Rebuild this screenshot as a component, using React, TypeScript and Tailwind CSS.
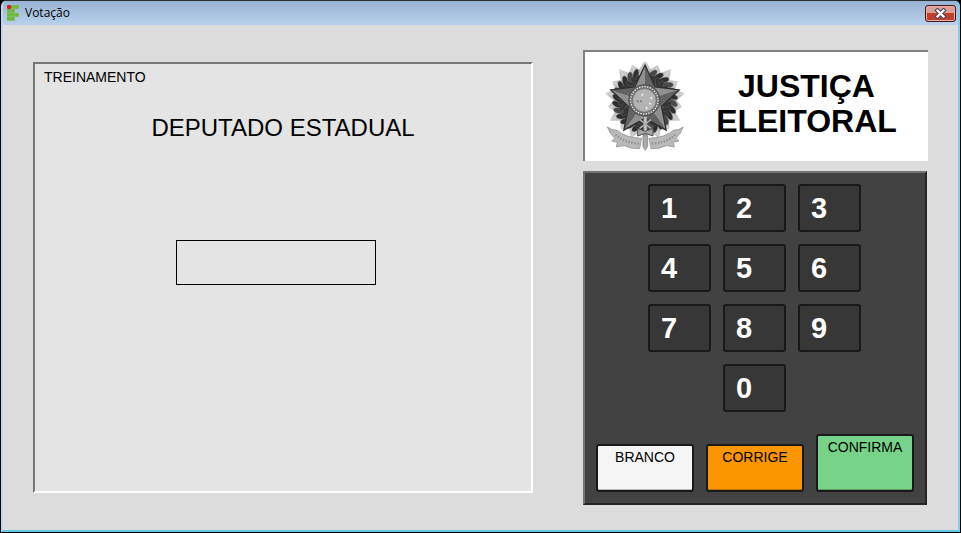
import React from "react";

const point = (cx: number, cy: number, r: number, deg: number): [number, number] => {
  const a = (deg * Math.PI) / 180;
  return [cx + r * Math.sin(a), cy - r * Math.cos(a)];
};
const toPoints = (list: [number, number][]) =>
  list.map((p) => p.map((n) => n.toFixed(1)).join(",")).join(" ");

function AppIcon() {
  const cells = [[1, 0], [2, 0], [0, 1], [1, 1], [0, 2], [1, 2], [2, 2], [0, 3], [1, 3]];
  return (
    <svg width="12" height="16" viewBox="0 0 12 16" aria-hidden="true">
      {cells.map(([x, y]) => (
        <rect key={`${x}-${y}`} x={x * 4} y={y * 4} width="3.8" height="3.8" rx="0.4" fill="#6fba3c" />
      ))}
      <circle cx="2" cy="2" r="2.2" fill="#e3121b" />
    </svg>
  );
}

function Emblem() {
  const cx = 192;
  const cy = 162;
  const rays = Array.from({ length: 36 }, (_, i) =>
    point(cx, cy - 2, i % 2 ? 94 : i % 4 ? 112 : 120, i * 10),
  );
  const tips = [0, 1, 2, 3, 4].map((i) => point(cx, cy, 108, i * 72));
  const inner = [0, 1, 2, 3, 4].map((i) => point(cx, cy, 52, i * 72 + 36));
  const leaves = Array.from({ length: 26 }, (_, i) => 16 + i * 13).filter((d) => d < 346);
  return (
    <svg className="h-[90px] w-20 shrink-0" viewBox="72 45 240 270" role="img" aria-label="Brasão">
      <polygon points={toPoints(rays)} fill="#c6c6c6" stroke="#a5a5a5" strokeWidth="1" />
      {rays.map(([x, y], i) => (
        <line key={i} x1={cx} y1={cy} x2={x} y2={y} stroke={i % 2 ? "#8f8f8f" : "#e2e2e2"} strokeWidth="2" />
      ))}
      <circle cx={cx} cy={cy} r="78" fill="#5c5c5c" />
      {leaves.map((d, i) => {
        const [x, y] = point(cx, cy, 84, d);
        const [u, v] = point(cx, cy, 68, d + 6);
        return (
          <g key={d}>
            <ellipse cx={x} cy={y} rx="8" ry="16" fill={i % 3 ? "#2e2e2e" : "#484848"} stroke="#666" strokeWidth="1" transform={`rotate(${d + 32} ${x} ${y})`} />
            <ellipse cx={u} cy={v} rx="8" ry="15" fill="#353535" stroke="#777" strokeWidth="1" transform={`rotate(${d - 35} ${u} ${v})`} />
          </g>
        );
      })}
      {tips.map((tip, i) => {
        const left = inner[(i + 4) % 5];
        const right = inner[i];
        return (
          <g key={i}>
            <polygon points={toPoints([tip, left, [cx, cy]])} fill="#909090" />
            <polygon points={toPoints([tip, right, [cx, cy]])} fill="#636363" />
          </g>
        );
      })}
      <polygon
        points={toPoints(tips.flatMap((tip, i) => [tip, inner[i]]))}
        fill="none"
        stroke="#2f2f2f"
        strokeWidth="4"
      />
      {/* sword hilt and knot below the star */}
      <path d="M188 208h10v54h-10z" fill="#c4c4c4" stroke="#666" strokeWidth="2" />
      <path d="M176 218l34 26M210 218l-34 26" stroke="#ababab" strokeWidth="5" />
      <path d="M170 244l23 9 23-9v23l-23-8-23 8z" fill="#a5a5a5" stroke="#4d4d4d" strokeWidth="3" />
      <circle cx="190" cy="160" r="47" fill="#707070" stroke="#4d4d4d" strokeWidth="3" />
      <circle cx="190" cy="160" r="41" fill="none" stroke="#e6e6e6" strokeWidth="4" strokeDasharray="4 4" />
      <circle cx="190" cy="160" r="35" fill="#b3b3b3" stroke="#777" strokeWidth="2" />
      {[[184, 143], [211, 153], [197, 183], [170, 163], [180, 163], [207, 170]].map(([x, y], i) => (
        <circle key={i} cx={x} cy={y} r="3" fill={i === 3 || i === 4 ? "#777" : "#f4f4f4"} />
      ))}
      {/* ribbon */}
      <path
        d="M79 240q14 10 30 10q22 21 73 24l-6 31q-25 2-46-9l-24 4 3-14-17-4 9-8q-15-14-22-34z"
        fill="#b9b9b9" stroke="#8a8a8a" strokeWidth="2"
      />
      <path
        d="M307 240q-14 10-30 10q-22 21-73 24l6 31q25 2 46-9l24 4-3-14 17-4-9-8q15-14 22-34z"
        fill="#b9b9b9" stroke="#8a8a8a" strokeWidth="2"
      />
      <path d="M104 263q25 25 72 27M282 263q-25 25-72 27" fill="none" stroke="#8c8c8c" strokeWidth="7" strokeDasharray="4 5" />
      <path d="M186 266h14v32l-7 12-7-12z" fill="#aaa" stroke="#777" strokeWidth="2" />
    </svg>
  );
}

function TitleBar() {
  return (
    <header className="flex h-6 items-center bg-linear-to-b from-[#98b3d2] to-[#b9d1ea] pr-0.5 pl-1">
      <AppIcon />
      <h1 className="ml-1.5 flex-1 font-['Open_Sans','Noto_Sans',sans-serif] text-xs leading-4 text-black">Votação</h1>
      <button
        type="button"
        aria-label="Fechar"
        className="flex h-[17px] w-[31px] items-center justify-center rounded-[3px] border border-[#45141c] bg-linear-to-b from-[#dc9f97] from-45% to-[#c0402c] to-50% shadow-[inset_0_0_0_1px_#e6b0a8]"
      >
        <svg width="13" height="11" viewBox="0 0 13 11" aria-hidden="true">
          <path d="M3.5 2.5l6 6M9.5 2.5l-6 6" stroke="#4c4c5c" strokeWidth="4.4" strokeLinecap="square" />
          <path d="M3.5 2.5l6 6M9.5 2.5l-6 6" stroke="#fff" strokeWidth="2.2" strokeLinecap="square" />
        </svg>
      </button>
    </header>
  );
}

function DigitKey({ digit }: { digit: number }) {
  return (
    <button
      type="button"
      className={`flex h-12 w-[63px] items-center rounded-[3px] border-2 border-[#191919] bg-[#373737] pl-[11px] text-[29px] leading-8 font-bold text-white ${
        digit === 0 ? "col-start-2" : ""
      }`}
    >
      {digit}
    </button>
  );
}

const actions = [
  { label: "BRANCO", look: "h-12 bg-[#f5f5f5] shadow-[inset_0_-1px_0_#b8b8b8]" },
  { label: "CORRIGE", look: "h-12 bg-[#fb9600] shadow-[inset_0_-1px_0_#bb7208]" },
  { label: "CONFIRMA", look: "h-[58px] bg-[#77d28a] shadow-[inset_0_-1px_0_#5a9e68]" },
];

export default function App() {
  return (
    <div className="min-h-screen bg-black font-['Liberation_Sans',Arial,sans-serif] text-black">
      <div className="flex min-h-screen flex-col rounded-t-md border border-black border-t-[#2b2f36]">
        <div className="flex flex-1 flex-col overflow-hidden rounded-t-[5px] border-x-2 border-b-2 border-x-[#b9d8f4] border-r-[#7fd0ea] border-b-[#63c8e2] bg-[#dcdcdc]">
          <TitleBar />
          <main className="flex flex-1 gap-[50px] px-[30px] py-[25px]">
            <section className="my-3 flex flex-1 flex-col border-2 border-t-[#767676] border-r-white border-b-white border-l-[#767676] bg-[#e4e4e4] px-[9px] pt-[5px]">
              <p className="text-sm leading-4">TREINAMENTO</p>
              <h2 className="mt-[29px] text-center text-2xl leading-7">DEPUTADO ESTADUAL</h2>
              <div className="mt-[98px] flex justify-center pr-3.5">
                <input
                  aria-label="Número do candidato"
                  className="h-[45px] w-[200px] border border-black bg-transparent text-center text-2xl outline-none"
                />
              </div>
            </section>
            <aside className="flex w-[345px] flex-col gap-2.5">
              <div className="flex h-[111px] items-center border-t-2 border-l-2 border-[#808080] bg-white pl-5">
                <Emblem />
                <p className="flex-1 pb-1.5 text-center text-[32px] leading-[35px] font-bold">
                  JUSTIÇA
                  <br />
                  ELEITORAL
                </p>
              </div>
              <div className="mr-px flex flex-1 flex-col items-center justify-between border-2 border-t-[#747474] border-r-[#262626] border-b-[#262626] border-l-[#747474] bg-[#424242] py-[11px]">
                <div className="grid w-[214px] grid-cols-[repeat(3,63px)] gap-3">
                  {[1, 2, 3, 4, 5, 6, 7, 8, 9, 0].map((d) => (
                    <DigitKey key={d} digit={d} />
                  ))}
                </div>
                <div className="flex items-end gap-3">
                  {actions.map(({ label, look }) => (
                    <button
                      key={label}
                      type="button"
                      className={`flex w-[98px] items-start justify-center rounded-[3px] border-2 border-[#191919] pt-[3px] text-sm leading-4 ${look}`}
                    >
                      {label}
                    </button>
                  ))}
                </div>
              </div>
            </aside>
          </main>
        </div>
      </div>
    </div>
  );
}
